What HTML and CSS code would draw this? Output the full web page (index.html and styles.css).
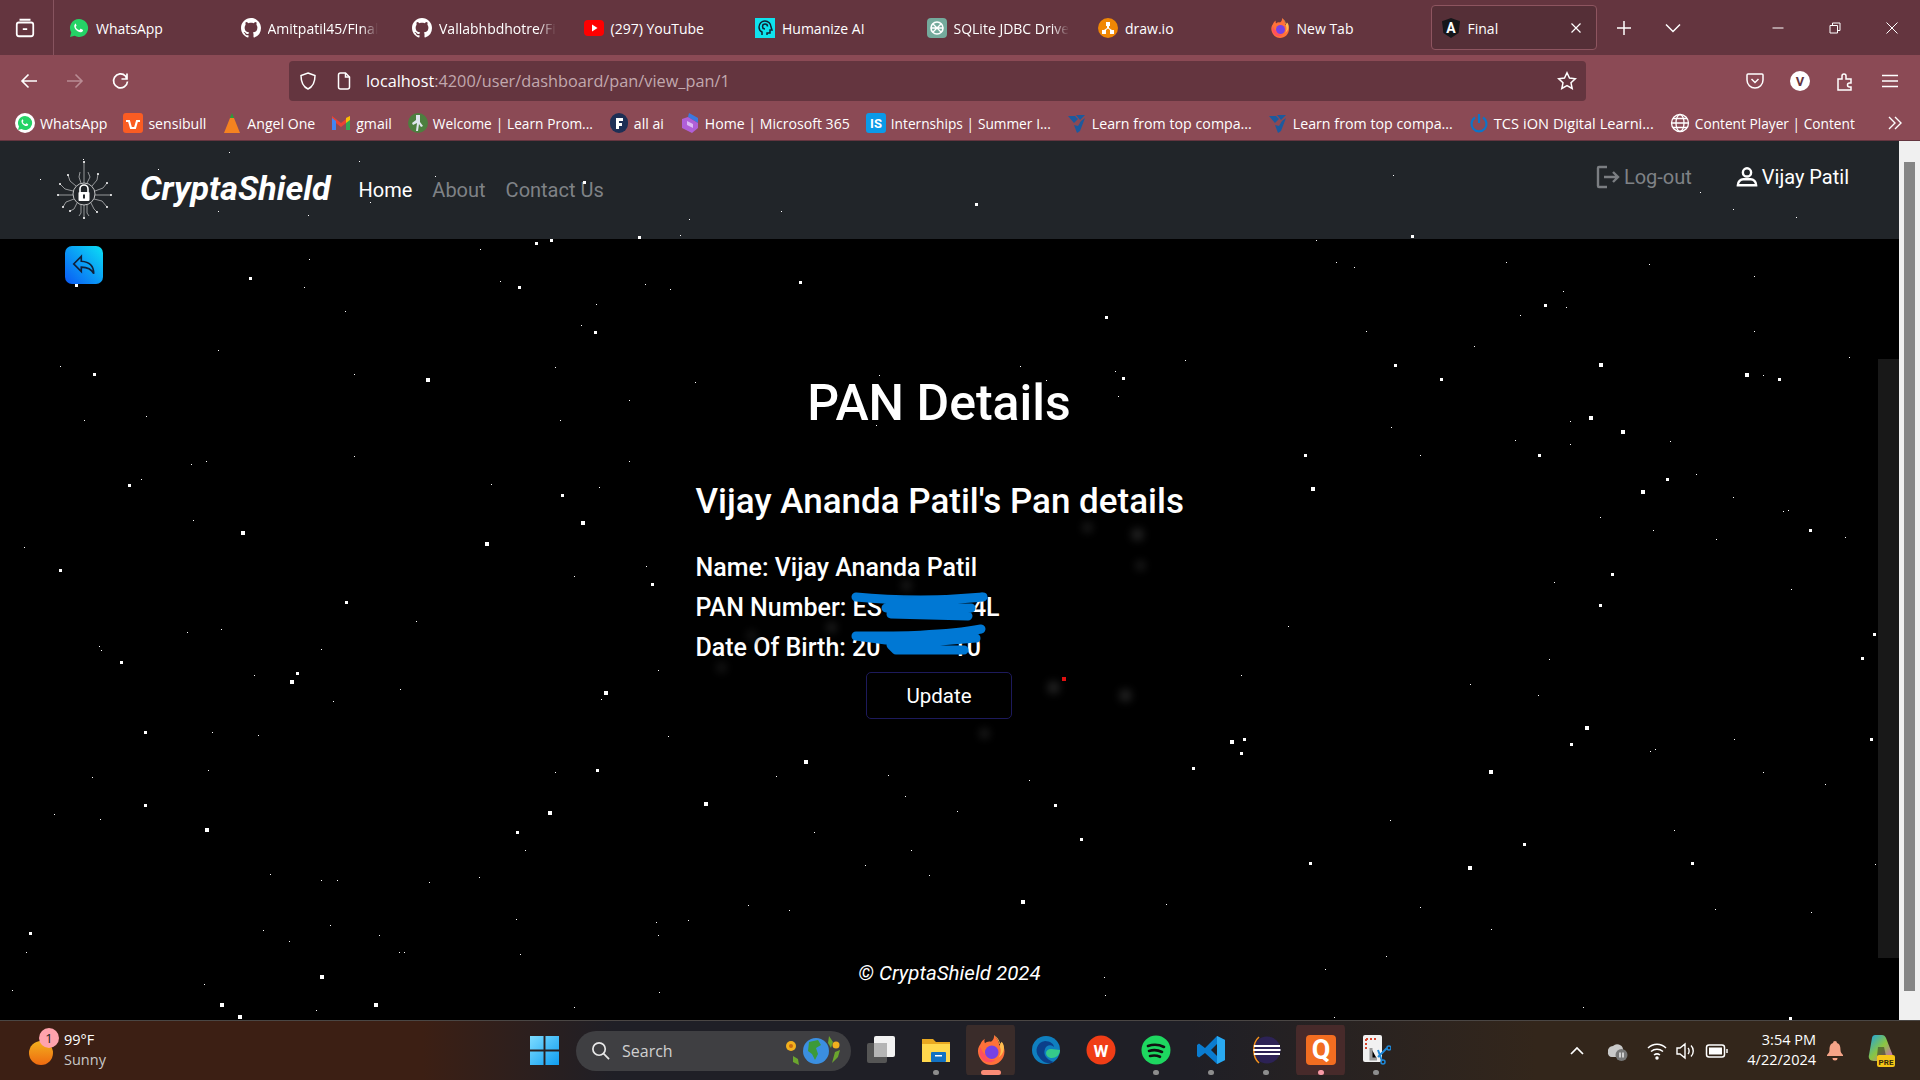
FILE: index.html
```html
<!DOCTYPE html>
<html lang="en">
<head>
    <meta charset="UTF-8">
    <title>Final</title>
    <link rel="stylesheet" href="styles.css">
</head>
<body>
    <svg class="defs" width="0" height="0">
        <symbol id="i-github" viewBox="0 0 16 16"><path fill="#fff" d="M8 0C3.58 0 0 3.58 0 8c0 3.54 2.29 6.53 5.47 7.59.4.07.55-.17.55-.38 0-.19-.01-.82-.01-1.49-2.01.37-2.53-.49-2.69-.94-.09-.23-.48-.94-.82-1.13-.28-.15-.68-.52-.01-.53.63-.01 1.08.58 1.23.82.72 1.21 1.87.87 2.33.66.07-.52.28-.87.51-1.07-1.78-.2-3.64-.89-3.64-3.95 0-.87.31-1.59.82-2.15-.08-.2-.36-1.02.08-2.12 0 0 .67-.21 2.2.82.64-.18 1.32-.27 2-.27.68 0 1.36.09 2 .27 1.53-1.04 2.2-.82 2.2-.82.44 1.1.16 1.92.08 2.12.51.56.82 1.27.82 2.15 0 3.07-1.87 3.75-3.65 3.95.29.25.54.73.54 1.48 0 1.07-.01 1.93-.01 2.2 0 .21.15.46.55.38A8.013 8.013 0 0016 8c0-4.42-3.58-8-8-8z"/></symbol>
        <symbol id="i-whatsapp" viewBox="0 0 20 20"><path fill="#25d366" d="M10 1a9 9 0 0 0-7.7 13.6L1 19l4.6-1.2A9 9 0 1 0 10 1z"/><path fill="#fff" d="M7.2 5.4c-.3 0-.8.1-1.1.6-.4.5-1 1.3-.8 2.7.3 1.7 1.6 3.4 3.3 4.5 1.5 1 3 1.3 4 .9.9-.3 1.5-1 1.5-1.8 0-.3-.1-.4-.4-.6l-1.8-.9c-.3-.1-.5 0-.7.2l-.7.9c-.2.2-.4.2-.6.1-1.4-.6-2.4-1.5-3.1-2.8-.1-.2-.1-.4.1-.6l.5-.6c.2-.2.2-.4.1-.6l-.8-1.9c-.2-.2-.4-.2-.6-.2z"/></symbol>
        <symbol id="i-whatsapp-b" viewBox="0 0 20 20"><circle cx="10" cy="10" r="10" fill="#fff"/><path fill="#25d366" d="M10 3a7 7 0 0 0-6 10.6L3 17l3.5-1A7 7 0 1 0 10 3z"/><path fill="#fff" d="M8 6.3c-.3 0-.6.1-.9.5-.3.4-.7 1-.6 2 .2 1.3 1.2 2.6 2.5 3.4 1.2.8 2.3 1 3.1.7.7-.3 1.1-.8 1.1-1.4 0-.2-.1-.3-.3-.4l-1.3-.7c-.2-.1-.4 0-.5.1l-.5.7c-.2.1-.3.1-.5.1-1-.5-1.8-1.2-2.3-2.1-.1-.2-.1-.3.1-.5l.4-.4c.1-.2.1-.3.1-.5l-.6-1.4c-.1-.1-.2-.1-.4-.1z"/></symbol>
        <symbol id="i-firefox" viewBox="0 0 20 20"><path fill="#ff7139" d="M3 6C1.5 8 1 10 1.5 12.5 2.5 17 6 20 10 20c5 0 9-4 9-9 0-2-.6-4-2-5.5-.4 1-1 1.5-1.5 1.5C15.500 4.5 14 2 12 0c.3 2-.6 3.5-2 4.5-1.5-.5-3 0-4 1-.5-1-.5-2-.2-3C4.5 3.5 3.5 4.5 3 6z"/><path fill="#ffbd4f" d="M12 0c3 2 4.5 5 4 8 1 2 .5 5-1 7 3-2 4-5 3.5-8-.3-1-.8-2-1.5-2.5-.4 1-1 1.5-1.5 1.5C15.500 4.5 14 2 12 0z"/><circle cx="10.5" cy="11.5" r="4.5" fill="#7542e5"/><path fill="#ff4f5e" d="M6 13c1 3 4 4.5 7 3.5-3 3-8 2-10-2C2 12 2.5 9 3 8c.5 2 1.5 3.5 3 5z"/></symbol>
        <symbol id="i-learn" viewBox="0 0 20 20"><path fill="#1c5a9e" d="M1 3h7l3 3-4 4zM9 2h9l-5 5zM14 8l4-3-5 13-3 2-3-8 4 1z"/></symbol>
    </svg>

    <header class="browser">
        <div class="tabbar">
            <div class="tabview">
                <svg class="ic18" viewBox="0 0 20 20" fill="none" stroke="#fff" stroke-width="1.6"><rect x="2.5" y="5" width="15" height="12.5" rx="2"/><path d="M5 2.5h10M8 11h4"/></svg>
            </div>
            <div class="tab"><svg class="fav"><use href="#i-whatsapp"/></svg><span class="tab-title">WhatsApp</span></div>
            <div class="tab"><svg class="fav"><use href="#i-github"/></svg><span class="tab-title fade">Amitpatil45/FInal</span></div>
            <div class="tab"><svg class="fav"><use href="#i-github"/></svg><span class="tab-title fade">Vallabhbdhotre/Fi</span></div>
            <div class="tab"><svg class="fav" viewBox="0 0 20 20"><rect x="0" y="2" width="20" height="16" rx="4" fill="#f00"/><path fill="#fff" d="M8 6.5l5.5 3.5L8 13.5z"/></svg><span class="tab-title">(297) YouTube</span></div>
            <div class="tab"><svg class="fav" viewBox="0 0 20 20"><rect width="20" height="20" fill="#0fe3ee"/><path fill="none" stroke="#123" stroke-width="1.5" d="M7 17v-3c-2-1-3-3-3-5a6 6 0 0 1 12 0l1 3h-2v3h-3v2M10 11a2.5 2.5 0 1 1 2.5-2.5"/></svg><span class="tab-title">Humanize AI</span></div>
            <div class="tab"><svg class="fav" viewBox="0 0 20 20"><rect width="20" height="20" rx="4" fill="#74aa9c"/><circle cx="10" cy="10" r="6" fill="none" stroke="#fff" stroke-width="1.6"/><path stroke="#fff" stroke-width="1.3" fill="none" d="M6 6l8 8M14 6l-8 8M4 10h12"/></svg><span class="tab-title fade">SQLite JDBC Drive</span></div>
            <div class="tab"><svg class="fav" viewBox="0 0 20 20"><circle cx="10" cy="10" r="10" fill="#f08705"/><path fill="#fff" d="M8 4h4v4h-1v2l3 2h2v4h-4v-4l-2-1.5L8 12v4H4v-4h2l3-2V8H8z"/></svg><span class="tab-title">draw.io</span></div>
            <div class="tab"><svg class="fav"><use href="#i-firefox"/></svg><span class="tab-title">New Tab</span></div>
            <div class="tab tab-active">
                <svg class="fav" viewBox="0 0 20 20"><path fill="#16161a" d="M10 0l9 3.2-1.4 11.8L10 20l-7.6-5L1 3.2z"/><text x="10" y="15" text-anchor="middle" class="fav-letter">A</text></svg>
                <span class="tab-title">Final</span>
                <svg class="tab-close" viewBox="0 0 12 12" stroke="#fff" stroke-width="1.2"><path d="M1.5 1.5l9 9M10.5 1.5l-9 9"/></svg>
            </div>
            <svg class="tab-new" viewBox="0 0 16 16" stroke="#fff" stroke-width="1.5"><path d="M8 1v14M1 8h14"/></svg>
            <svg class="tab-list" viewBox="0 0 16 10" fill="none" stroke="#fff" stroke-width="1.5"><path d="M1 1.5l7 7 7-7"/></svg>
            <div class="win-controls">
                <svg viewBox="0 0 12 12" stroke="#fff"><path d="M0.5 6h11"/></svg>
                <svg viewBox="0 0 12 12" fill="none" stroke="#fff"><path d="M1 3.5h7.5V11H1zM3.5 3.5V1H11v7.5H8.5"/></svg>
                <svg viewBox="0 0 12 12" stroke="#fff"><path d="M0.5 0.5l11 11M11.5 0.5l-11 11"/></svg>
            </div>
        </div>

        <div class="toolbar">
            <svg class="tool back" viewBox="0 0 20 20" fill="none" stroke="#fff" stroke-width="1.6"><path d="M18 10H3M9.5 3.5L3 10l6.5 6.5"/></svg>
            <svg class="tool fwd" viewBox="0 0 20 20" fill="none" stroke="#b98c94" stroke-width="1.6"><path d="M2 10h15M10.5 3.5L17 10l-6.5 6.5"/></svg>
            <svg class="tool reload" viewBox="0 0 20 20" fill="none" stroke="#fff" stroke-width="1.7"><path d="M16 2.5V8h-5.5M16.5 10.5a7 7 0 1 1-2-5.5l1.500 3"/></svg>
            <div class="urlbar">
                <svg class="url-ic" viewBox="0 0 20 20" fill="none" stroke="#fff" stroke-width="1.5"><path d="M10 2l7 2.5c0 6-1.5 11-7 13.5C4.5 15.5 3 10.5 3 4.5z"/></svg>
                <svg class="url-ic page-ic" viewBox="0 0 20 20" fill="none" stroke="#fff" stroke-width="1.5"><path d="M4.5 4a2 2 0 0 1 2-2h5l4 4v10a2 2 0 0 1-2 2h-7a2 2 0 0 1-2-2z"/><path d="M11.5 2v4h4"/></svg>
                <span class="url-text"><span class="url-host">localhost</span>:4200/user/dashboard/pan/view_pan/1</span>
                <svg class="url-star" viewBox="0 0 20 20" fill="none" stroke="#fff" stroke-width="1.5"><path d="M10 1.8l2.5 5.3 5.8.7-4.300 4 1.2 5.700L10 14.700l-5.200 2.800L6 11.800l-4.300-4 5.800-.7z"/></svg>
            </div>
            <div class="tool-right">
                <svg class="tool" viewBox="0 0 20 20" fill="none" stroke="#fff" stroke-width="1.5"><path d="M3 3h14a1 1 0 0 1 1 1v5a8 8 0 0 1-16 0V4a1 1 0 0 1 1-1z"/><path d="M6.5 8l3.5 3.5L13.5 8"/></svg>
                <svg class="tool" viewBox="0 0 20 20"><circle cx="10" cy="10" r="10" fill="#fff"/><text x="10" y="15" text-anchor="middle" class="avatar-letter">V</text></svg>
                <svg class="tool" viewBox="0 0 20 20" fill="none" stroke="#fff" stroke-width="1.5"><path d="M3 8h4V5a2 2 0 0 1 4 0v3h5v4h-1.5a2 2 0 0 0 0 4H16v3H3z"/></svg>
                <svg class="tool" viewBox="0 0 20 20" stroke="#fff" stroke-width="1.6"><path d="M2 4.5h16M2 10h16M2 15.5h16"/></svg>
            </div>
        </div>

        <nav class="bookmarks">
            <a class="bm"><svg class="fav"><use href="#i-whatsapp-b"/></svg><span>WhatsApp</span></a>
            <a class="bm"><svg class="fav" viewBox="0 0 20 20"><rect width="20" height="20" rx="3" fill="#fa5c23"/><path fill="none" stroke="#fff" stroke-width="2.2" d="M3 8h3l2 7h4l2-7h3"/></svg><span>sensibull</span></a>
            <a class="bm"><svg class="fav" viewBox="0 0 20 20"><path fill="#2a9d3a" d="M10 0l2 5H8z"/><path fill="#f58220" d="M8 5h4l6 15H2z"/></svg><span>Angel One</span></a>
            <a class="bm"><svg class="fav" viewBox="0 0 20 20"><path fill="#ea4335" d="M1 3l9 7 9-7v4l-9 7-9-7z"/><path fill="#4285f4" d="M1 5l4 3v9H1z"/><path fill="#34a853" d="M19 5l-4 3v9h4z"/><path fill="#fbbc04" d="M15 5l4-2v4l-4 3z"/></svg><span>gmail</span></a>
            <a class="bm"><svg class="fav" viewBox="0 0 20 20"><circle cx="10" cy="10" r="10" fill="#4d7f3f"/><path fill="#dfe6ee" d="M8 2h4v7l3 4-2 1-2-3-1 7H8l1-8-4 2-1-2 4-3z"/></svg><span class="bm-long">Welcome | Learn Prom...</span></a>
            <a class="bm"><svg class="fav" viewBox="0 0 20 20"><rect x="1" width="18" height="20" rx="9" fill="#1e2f55"/><path fill="#fff" d="M7 5h7v3h-4v2h3v3h-3v3H7z"/></svg><span>all ai</span></a>
            <a class="bm"><svg class="fav" viewBox="0 0 20 20"><path fill="#3b79e0" d="M9 0l9 5v5L8 4z"/><path fill="#b05fd8" d="M2 6l6-2 10 6v5l-6 5-10-5z"/><path fill="#dcb8f5" d="M7 8l6 3v4l-6-3z"/></svg><span>Home | Microsoft 365</span></a>
            <a class="bm"><svg class="fav" viewBox="0 0 20 20"><rect width="20" height="20" rx="3" fill="#0a9ae8"/><text x="10" y="15" text-anchor="middle" class="fav-letter small">IS</text></svg><span class="bm-long">Internships | Summer I...</span></a>
            <a class="bm"><svg class="fav"><use href="#i-learn"/></svg><span class="bm-long learn">Learn from top compa...</span></a>
            <a class="bm"><svg class="fav"><use href="#i-learn"/></svg><span class="bm-long learn">Learn from top compa...</span></a>
            <a class="bm"><svg class="fav" viewBox="0 0 20 20" fill="none" stroke="#0c75c8" stroke-width="2.2"><path d="M10 1v9M6 4.5a7.5 7.5 0 1 0 8 0"/></svg><span class="bm-long tcs">TCS iON Digital Learni...</span></a>
            <a class="bm"><svg class="fav" viewBox="0 0 20 20" fill="none" stroke="#fff" stroke-width="1.3"><circle cx="10" cy="10" r="8.5"/><ellipse cx="10" cy="10" rx="4" ry="8.5"/><path d="M1.5 10h17M3 5.5h14M3 14.5h14"/></svg><span class="bm-long">Content Player | Content</span></a>
            <svg class="bm-more" viewBox="0 0 16 14" fill="none" stroke="#fff" stroke-width="1.4"><path d="M2 1l6 6-6 6M8 1l6 6-6 6"/></svg>
        </nav>
    </header>

    <div class="viewport">
        <div class="page">
            <div class="navbar">
                <svg class="logo" viewBox="0 0 56 58" fill="none" stroke="#c8cacc" stroke-width="0.8">
                    <circle cx="27" cy="33" r="11" stroke="#e8e8e8"/>
                    <g stroke-width="0.7">
                        <path d="M27 22V0M24 22l-2-6 1-5M30 22l3-6-2-5M19 25l-6-5-2-6M35 25l5-6 1-6M16 30l-8-2-5-5M38 30l8-3 4-5M16 34H1M38 34h16M17 38l-8 3-3 5M37 38l8 2 5 6M20 42l-3 6-4 2M34 42l3 6 3 3M24 44v8l-2 3M27 44v14M30 44v8l2 3"/>
                    </g>
                    <g fill="#fff" stroke="none">
                        <circle cx="27" cy="1" r="1"/><circle cx="11" cy="14" r="1"/><circle cx="41" cy="13" r="1"/><circle cx="3" cy="23" r="1"/><circle cx="50" cy="22" r="1"/><circle cx="1" cy="34" r="1"/><circle cx="54" cy="34" r="1"/><circle cx="6" cy="46" r="1"/><circle cx="50" cy="46" r="1"/><circle cx="13" cy="50" r="1"/><circle cx="40" cy="51" r="1"/><circle cx="27" cy="57" r="1"/>
                    </g>
                    <path d="M23 31v-3a4 4 0 0 1 8 0v3" stroke="#fff" stroke-width="1.6"/>
                    <rect x="21.5" y="31" width="11" height="9" rx="1" fill="#fff" stroke="none"/>
                    <rect x="26" y="33.5" width="2" height="4" fill="#212529" stroke="none"/>
                </svg>
                <span class="brand">CryptaShield</span>
                <a class="nav-link active">Home</a>
                <a class="nav-link">About</a>
                <a class="nav-link">Contact Us</a>
                <div class="nav-right">
                    <a class="nav-link"><svg class="nav-ic logout-ic" viewBox="0 0 24 24" fill="none" stroke="#7b7e82" stroke-width="2.4"><path d="M11 2H3a1 1 0 0 0-1 1v18a1 1 0 0 0 1 1h8M8 12h14M17 7l5 5-5 5"/></svg>Log-out</a>
                    <a class="nav-link active"><svg class="nav-ic" viewBox="0 0 24 24" fill="none" stroke="#fff" stroke-width="2.6"><circle cx="12" cy="7" r="4.5"/><path d="M2 21c0-4 3-6.5 6-6.5h8c3 0 6 2.5 6 6.5z"/></svg>Vijay Patil</a>
                </div>
            </div>

            <button class="back-btn" type="button">
                <svg viewBox="0 0 24 24" fill="none" stroke="#10203a" stroke-width="1.5"><path d="M9.5 4L2.5 11l7 7v-4c5 0 9 1 11.500 6 0-7-4-11-11.500-11.500z"/></svg>
            </button>

            <main class="pan">
                <h1 class="pan-title">PAN Details</h1>
                <div class="pan-card">
                    <h2 class="pan-owner">Vijay Ananda Patil's Pan details</h2>
                    <p class="pan-row">Name: Vijay Ananda Patil</p>
                    <p class="pan-row">PAN Number: ES<span class="redacted gap-pan"></span>4L</p>
                    <p class="pan-row">Date Of Birth: 20<span class="redacted gap-dob"></span>10</p>
                    <svg class="scribble" viewBox="0 0 487 110" fill="none" stroke="#0078d4" stroke-width="9" stroke-linecap="round" stroke-linejoin="round">
                        <path d="M160 37C200 41 250 41 287 37L200 43 190 48 275 48 195 54 272 56"/>
                        <path d="M285 69C250 76 200 76 160 76L190 80 280 78 195 85 200 90 268 90"/>
                    </svg>
                </div>
                <button class="update-btn" type="button">Update</button>
            </main>

            <footer class="page-footer">© CryptaShield 2024</footer>

            <div class="side-panel"></div>
            <div class="sky">
                <div class="glows"></div>
                <div class="stars-sm"></div>
                <div class="stars-md"></div>
                <div class="stars-lg"></div>
            </div>
        </div>
        <div class="scrollbar"><div class="thumb"></div></div>
    </div>

    <footer class="taskbar">
        <div class="weather">
            <span class="sun"></span>
            <span class="badge">1</span>
            <div class="weather-text">
                <div>99°F</div>
                <div class="dim">Sunny</div>
            </div>
        </div>
        <div class="task-center">
            <svg class="start" viewBox="0 0 30 30"><defs><linearGradient id="winblue" x1="0" y1="0" x2="1" y2="1"><stop offset="0" stop-color="#7ddcff"/><stop offset="1" stop-color="#0f9df0"/></linearGradient></defs><path fill="url(#winblue)" d="M0 0h14v14H0zM16 0h14v14H16zM0 16h14v14H0zM16 16h14v14H16z"/></svg>
            <div class="search">
                <svg class="search-ic" viewBox="0 0 20 20" fill="none" stroke="#e8e8e8" stroke-width="1.8"><circle cx="8.5" cy="8.5" r="6.5"/><path d="M13 13l6 6"/></svg>
                <span>Search</span>
                <svg class="search-art" viewBox="0 0 60 34">
                    <circle cx="33" cy="17" r="13" fill="#3b8fe0"/>
                    <path fill="#3c9a38" d="M26 8l9-2 3 5-5 3 2 6-3 6-3-6-4-3z"/>
                    <path fill="#6ba52e" d="M46 2l4 6-2 6-3-5zM52 18l5-2-2 7-6 6zM10 22l5 3 1 6-6-3z"/>
                    <circle cx="8" cy="12" r="5" fill="#f2b01e"/><circle cx="8" cy="12" r="2" fill="#c96a10"/>
                    <circle cx="53" cy="11" r="3.5" fill="#f2b01e"/>
                </svg>
            </div>
            <div class="task"><svg viewBox="0 0 30 30"><rect x="1" y="8" width="20" height="20" rx="2" fill="#555"/><rect x="8" y="1" width="21" height="21" rx="2" fill="#f2f2f2"/><rect x="8" y="8" width="13" height="14" fill="#b5b5b5"/></svg></div>
            <div class="task dot"><svg viewBox="0 0 30 30"><path fill="#e8a820" d="M1 4h11l3 3h14v20H1z"/><path fill="#ffd84d" d="M1 9h28v18H1z"/><rect x="10" y="17" width="15" height="10" rx="1" fill="#1272c4"/><rect x="14" y="20" width="7" height="1.5" fill="#fff"/></svg></div>
            <div class="task running"><svg><use href="#i-firefox"/></svg></div>
            <div class="task"><svg viewBox="0 0 30 30"><circle cx="15" cy="15" r="14" fill="#0f7fbf"/><path fill="#35c98a" d="M29 15c0 5-4 8-8 8-3 0-6-2-6-5 0-2 2-4 5-4 4 0 6 1 9 1z"/><path fill="#0b3f8a" d="M8 22C3 16 6 7 14 6c5 0 9 3 9 6-3-3-8-2-9 2-1 3-1 5 1 8 3 4 8 5 8 5-6 3-12 0-15-5z"/></svg></div>
            <div class="task"><svg viewBox="0 0 30 30"><circle cx="15" cy="15" r="14.5" fill="#f03d16"/><text x="15" y="22" text-anchor="middle" class="task-letter">W</text></svg></div>
            <div class="task dot"><svg viewBox="0 0 30 30"><circle cx="15" cy="15" r="14.5" fill="#1ed760"/><path fill="none" stroke="#111" stroke-width="2.6" stroke-linecap="round" d="M7 11c6-2 11-1.5 16 1M8 16c5-1.5 9-1 13 1M9 21c4-1 7-.6 10 .8"/></svg></div>
            <div class="task dot"><svg viewBox="0 0 30 30"><path fill="#0a7ccf" d="M21 1l8 4v20l-8 4-12-11-6 4.5-2-1.5V10l2-1.5L9 13z"/><path fill="#29a9f0" d="M21 1l8 4v20l-8 4z"/><path fill="#1f2024" d="M21 9l-6 6 6 6z"/></svg></div>
            <div class="task dot"><svg viewBox="0 0 30 30"><circle cx="16" cy="15" r="13.5" fill="#2c2255"/><path fill="none" stroke="#f7941e" stroke-width="1.5" d="M8 2C1 8 1 22 8 28"/><path stroke="#fff" stroke-width="2" d="M3 11h26M2.5 15h27M3 19h26"/></svg></div>
            <div class="task running-dot"><svg viewBox="0 0 30 30"><rect width="30" height="30" rx="4" fill="#f26d21"/><text x="15" y="24" text-anchor="middle" class="task-letter big">Q</text></svg></div>
            <div class="task dot"><svg viewBox="0 0 30 30"><rect x="2" y="0" width="19" height="27" rx="2" fill="#f1f1f1"/><path stroke="#d9452c" stroke-width="2" stroke-dasharray="2 2" fill="none" d="M5 4h11M5 4v10"/><path stroke="#9a9a9a" stroke-width="3" d="M10 13v11h6"/><path stroke="#1e88d8" stroke-width="2" fill="none" d="M17 22l9-9M17 15l4 11"/><circle cx="22" cy="27" r="2" fill="none" stroke="#1e88d8" stroke-width="1.5"/><circle cx="28" cy="13" r="2" fill="none" stroke="#1e88d8" stroke-width="1.5"/></svg></div>
        </div>
        <div class="tray">
            <svg class="tray-chev" viewBox="0 0 14 10" fill="none" stroke="#fff" stroke-width="1.7"><path d="M1 8l6-6 6 6"/></svg>
            <svg class="tray-ic cloud" viewBox="0 0 22 22"><path fill="#c9c9c9" d="M2 12a5 5 0 0 1 5-6 6 6 0 0 1 10 3v8H6a4 4 0 0 1-4-5z"/><circle cx="15.5" cy="15" r="6" fill="#777"/><path stroke="#fff" stroke-width="1.3" d="M14 12.5v5M17 12.5v5"/></svg>
            <svg class="tray-ic wifi" viewBox="0 0 22 22" fill="none" stroke="#fff" stroke-width="1.5"><path d="M2 8c5-5 13-5 18 0M5 11.5c3.5-3 8.5-3 12 0M8 15c2-1.5 4-1.5 6 0"/><circle cx="11" cy="18" r="1" fill="#fff"/></svg>
            <svg class="tray-ic vol" viewBox="0 0 22 22" fill="none" stroke="#fff" stroke-width="1.4"><path d="M2 8v6h3l5 4V4L5 8zM13 8c1.5 1.5 1.5 4.5 0 6M16 5.5c3 3 3 8 0 11"/></svg>
            <svg class="tray-ic batt" viewBox="0 0 24 22" fill="none" stroke="#fff" stroke-width="1.5"><rect x="1.5" y="5" width="18" height="12" rx="2.5"/><rect x="4" y="7.5" width="13" height="7" fill="#fff" stroke="none"/><path d="M22 9v4"/></svg>
            <div class="clock">
                <div>3:54 PM</div>
                <div>4/22/2024</div>
            </div>
            <svg class="tray-ic bell" viewBox="0 0 20 22"><path fill="#f5a488" d="M10 1a2 2 0 0 1 2 2c3 1 3.5 4 3.5 7 0 2 1 3.5 2.5 5v1H2v-1c1.5-1.5 2.5-3 2.5-5 0-3 .5-6 3.5-7a2 2 0 0 1 2-2zM7.5 18h5a2.5 2.5 0 0 1-5 0z"/></svg>
            <svg class="copilot" viewBox="0 0 30 34"><defs><linearGradient id="cop" x1="0" y1="0" x2="1" y2="1"><stop offset="0" stop-color="#19a3e8"/><stop offset="0.5" stop-color="#8cc63f"/><stop offset="1" stop-color="#d74fd0"/></linearGradient></defs><path fill="url(#cop)" d="M9 1h7c2 0 3 1 4 3l7 18c1 3-1 5-4 5H8C4 27 2 24 3 21L6 4c0-2 2-3 3-3z"/><path fill="#2a2320" d="M12 13h6l2 9h-9z" opacity=".5"/><rect x="11" y="21" width="18" height="12" rx="2" fill="#f5c518"/><text x="20" y="30.5" text-anchor="middle" class="pre-letter">PRE</text></svg>
        </div>
    </footer>
</body>
</html>
```

FILE: styles.css
```css
* {
    box-sizing: border-box;
}

html, body {
    margin: 0;
    padding: 0;
    height: 100%;
}

body {
    display: flex;
    flex-direction: column;
    width: 1920px;
    height: 1080px;
    overflow: hidden;
    background-color: #000;
    color: #fff;
    font-family: Roboto, sans-serif;
}

.defs {
    position: absolute;
}

svg {
    display: block;
    flex: none;
}

.fav {
    width: 20px;
    height: 20px;
}

.fav-letter {
    font: 700 14px Roboto, sans-serif;
    fill: #fff;
}

.fav-letter.small {
    font-size: 13px;
}

/* browser chrome */
.browser {
    font-family: "Open Sans", sans-serif;
    font-size: 14px;
    flex: none;
}

.tabbar {
    display: flex;
    align-items: center;
    height: 55px;
    background-color: #64353f;
}

.tabview {
    display: flex;
    align-items: center;
    justify-content: center;
    width: 54px;
    height: 55px;
    padding-right: 4px;
    border-right: 1px solid #87545f;
    margin-right: 4.5px;
}

.ic18 {
    width: 22px;
    height: 22px;
}

.tab {
    display: flex;
    align-items: center;
    gap: 7px;
    width: 171.5px;
    height: 45px;
    padding-left: 10.5px;
}

.tab-title {
    padding-top: 1px;
    white-space: nowrap;
}

.fade {
    -webkit-mask-image: linear-gradient(to right, #000 85%, transparent);
    mask-image: linear-gradient(to right, #000 85%, transparent);
}

.tab-active {
    width: 166px;
    padding-left: 9px;
    margin-right: 19px;
    background-color: #552f37;
    border: 1px solid #8e5560;
    border-radius: 4px;
}

.tab-close {
    width: 12px;
    height: 12px;
    margin-left: auto;
    margin-right: 14px;
}

.tab-new {
    width: 16px;
    height: 16px;
    margin-right: 33px;
}

.tab-list {
    width: 16px;
    height: 10px;
}

.win-controls {
    display: flex;
    align-items: center;
    gap: 45px;
    margin-left: 91px;
}

.win-controls svg {
    width: 12px;
    height: 12px;
}

.toolbar {
    display: flex;
    align-items: center;
    height: 51px;
    padding-left: 19px;
    background-color: #8b4a55;
}

.tool {
    width: 20px;
    height: 20px;
}

.fwd, .reload {
    margin-left: 26px;
}

.urlbar {
    display: flex;
    align-items: center;
    width: 1297px;
    height: 40px;
    margin-left: 158px;
    padding: 0 9px 0 9px;
    background-color: #64353f;
    border-radius: 4px;
}

.url-ic {
    width: 20px;
    height: 20px;
}

.page-ic {
    margin-left: 16px;
}

.url-text {
    margin-left: 12px;
    padding-top: 1px;
    font-size: 16.3px;
    color: #c2a8ae;
    white-space: nowrap;
}

.url-host {
    color: #fff;
}

.url-star {
    width: 20px;
    height: 20px;
    margin-left: auto;
}

.tool-right {
    display: flex;
    align-items: center;
    gap: 25px;
    margin-left: 159px;
}

.avatar-letter {
    font: 700 13px Roboto, sans-serif;
    fill: #64353f;
}

.bookmarks {
    display: flex;
    align-items: center;
    height: 35px;
    padding-left: 15px;
    gap: 16px;
    background-color: #8b4a55;
    border-bottom: 1px solid #64353f;
    font-size: 14.1px;
    white-space: nowrap;
}

.bm {
    display: flex;
    align-items: center;
    gap: 5px;
    color: #fff;
}

/* firefox caps long bookmark titles at the same width */
.bm-long {
    display: block;
    width: 160px;
    font-size: 13.7px;
    text-align: justify;
    text-align-last: justify;
    white-space: normal;
}

.learn {
    font-size: 14.2px;
}

.tcs {
    font-size: 14.6px;
}

.bm-more {
    width: 16px;
    height: 14px;
    margin-left: auto;
    margin-right: 17px;
}

/* the page inside the browser */
.viewport {
    display: flex;
    flex: 1;
    min-height: 0;
}

.page {
    position: relative;
    display: flex;
    flex-direction: column;
    flex: 1;
    overflow: hidden;
    background-color: #000;
}

.navbar {
    display: flex;
    align-items: center;
    flex: none;
    height: 98px;
    padding-left: 57px;
    background-color: #212529;
}

.logo {
    width: 56px;
    height: 58px;
    margin-right: 27px;
}

.brand {
    margin-right: 18px;
    margin-bottom: 5px;
    font-size: 34px;
    font-weight: 700;
    font-style: italic;
}

.nav-link {
    display: flex;
    align-items: center;
    padding: 0 10px;
    font-size: 20px;
    color: #7f8286;
    white-space: nowrap;
}

.nav-link.active {
    color: #fff;
}

.nav-right {
    display: flex;
    align-items: center;
    gap: 24px;
    margin-left: auto;
    margin-right: 40px;
    margin-bottom: 26px;
}

.nav-ic {
    width: 22px;
    height: 22px;
    margin-right: 4px;
}

.logout-ic {
    width: 24px;
    height: 24px;
}

.back-btn {
    display: flex;
    align-items: center;
    justify-content: center;
    flex: none;
    width: 38px;
    height: 38px;
    margin: 7px 0 0 65px;
    padding: 0;
    border: none;
    border-radius: 7px;
    background: linear-gradient(to bottom left, #0be0f6, #0a58f5);
}

.back-btn svg {
    width: 26px;
    height: 26px;
}

.pan {
    display: flex;
    flex-direction: column;
    align-items: center;
    padding-right: 21px;
}

.pan-title {
    margin: 89px 0 0;
    font-size: 50px;
    line-height: 60px;
    font-weight: 500;
}

.pan-card {
    position: relative;
    width: 487px;
    margin-top: 48px;
}

.pan-owner {
    margin: 0 0 25px;
    font-size: 35px;
    line-height: 42px;
    font-weight: 500;
    white-space: nowrap;
}

.pan-row {
    margin: 0;
    font-size: 25px;
    line-height: 40px;
    font-weight: 500;
}

.redacted {
    display: inline-block;
}

.gap-pan {
    width: 90px;
}

.gap-dob {
    width: 72px;
}

.scribble {
    position: absolute;
    left: 0;
    bottom: -2px;
    width: 487px;
    height: 110px;
}

.update-btn {
    width: 146px;
    height: 47px;
    margin-top: 4px;
    background: transparent;
    border: 1px solid #1d1a5c;
    border-radius: 5px;
    color: #fff;
    font-family: Roboto, sans-serif;
    font-size: 20.5px;
}

.page-footer {
    margin-top: auto;
    padding-bottom: 35px;
    text-align: center;
    font-size: 20.5px;
    font-style: italic;
}

.side-panel {
    position: absolute;
    top: 218px;
    right: 0;
    width: 21px;
    height: 599px;
    background-color: #181818;
}

/* star field: coordinates are screen pixels, the layer is pulled up by the chrome height */
.sky {
    position: absolute;
    left: 0;
    top: -141px;
    pointer-events: none;
}

.sky div {
    position: absolute;
}

.glows {
    width: 1px;
    height: 1px;
    box-shadow: 1087px 527px 9px 4px #1e1e1e, 1137px 534px 9px 5px #252525, 1140px 565px 9px 4px #1c1c1c, 906px 585px 9px 4px #1e1e1e, 831px 627px 9px 4px #222, 751px 635px 9px 4px #161616, 721px 667px 9px 4px #181818, 1053px 687px 9px 5px #252525, 1125px 695px 9px 5px #252525, 984px 733px 8px 4px #1e1e1e;
}

.stars-sm {
    width: 1px;
    height: 1px;
    box-shadow: 83px 159px #fff, 40px 179px #fff, 229px 152px #fff, 158px 169px #fff, 359px 161px #fff, 435px 176px #fff, 218px 211px #fff, 308px 215px #fff, 370px 202px #fff, 1700px 192px #fff, 1733px 209px #fff, 1796px 217px #fff, 1393px 175px #fff, 689px 219px #fff, 781px 211px #fff,
        480px 249px #fff, 309px 259px #fff, 304px 287px #fff, 500px 281px #fff, 645px 284px #fff, 670px 289px #fff, 596px 304px #fff, 345px 311px #fff, 581px 325px #fff, 218px 350px #fff, 60px 366px #fff, 354px 374px #fff, 555px 367px #fff, 695px 382px #fff, 629px 400px #fff, 84px 420px #fff, 146px 416px #fff, 560px 420px #fff, 354px 456px #fff, 629px 461px #fff, 191px 464px #fff, 206px 461px #fff, 141px 479px #fff, 491px 484px #fff, 599px 487px #fff, 193px 520px #fff, 24px 547px #fff, 646px 566px #fff, 574px 576px #fff, 416px 621px #fff, 187px 632px #fff, 221px 629px #fff, 680px 235px #fff,
        99px 646px #fff, 101px 650px #fff, 321px 649px #fff, 254px 675px #fff, 658px 670px #fff, 400px 689px #fff, 333px 701px #fff, 601px 699px #fff, 212px 732px #fff, 258px 735px #fff, 668px 736px #fff, 208px 770px #fff, 92px 777px #fff, 555px 772px #fff, 54px 814px #fff, 100px 819px #fff, 525px 850px #fff, 270px 874px #fff, 321px 880px #fff, 337px 880px #fff, 429px 882px #fff, 479px 877px #fff, 516px 919px #fff, 656px 922px #fff, 688px 920px #fff, 330px 925px #fff, 263px 930px #fff, 379px 935px #fff, 289px 941px #fff, 658px 935px #fff, 26px 952px #fff, 399px 952px #fff, 404px 952px #fff, 520px 954px #fff, 204px 984px #fff, 12px 990px #fff, 659px 992px #fff, 316px 1010px #fff, 574px 1007px #fff,
        1316px 240px #fff, 1336px 262px #fff, 1354px 267px #fff, 1506px 262px #fff, 1649px 264px #fff, 1754px 276px #fff, 1563px 291px #fff, 1566px 307px #fff, 1520px 315px #fff, 1366px 331px #fff, 1754px 331px #fff, 1474px 346px #fff, 1849px 357px #fff, 1763px 375px #fff, 1570px 421px #fff, 1391px 427px #fff, 1515px 440px #fff, 1570px 444px #fff, 1670px 441px #fff, 1420px 455px #fff, 1696px 474px #fff, 1733px 497px #fff, 1783px 511px #fff, 1788px 510px #fff, 1600px 517px #fff, 1653px 530px #fff, 1716px 539px #fff, 1845px 537px #fff, 1554px 582px #fff, 1791px 589px #fff, 1288px 626px #fff,
        1549px 659px #fff, 1241px 675px #fff, 1470px 684px #fff, 1538px 695px #fff, 1734px 739px #fff, 1650px 751px #fff, 1655px 749px #fff, 1763px 772px #fff, 1825px 784px #fff, 1390px 820px #fff, 1674px 830px #fff, 1875px 864px #fff, 1420px 907px #fff, 1715px 909px #fff, 1811px 912px #fff, 1491px 929px #fff, 1386px 956px #fff, 1325px 969px #fff, 1583px 1007px #fff, 1334px 1017px #fff,
        776px 776px #fff, 888px 775px #fff, 1029px 780px #fff, 905px 796px #fff, 957px 811px #fff, 814px 832px #fff, 911px 850px #fff, 865px 865px #fff, 929px 875px #fff, 748px 905px #fff, 789px 910px #fff, 1166px 904px #fff, 1104px 977px #fff, 1105px 995px #fff, 879px 375px #fff, 1020px 366px #fff, 1046px 380px #fff, 1115px 371px #fff, 1118px 396px #fff, 1185px 360px #fff, 876px 425px #fff;
}

.stars-md {
    left: -1px;
    top: -1px;
    width: 3px;
    height: 3px;
    box-shadow: 536px 243px #fff, 551px 240px #fff, 639px 237px #fff, 250px 278px #fff, 76px 285px #fff, 519px 287px #fff, 595px 332px #fff, 94px 374px #fff, 129px 485px #fff, 562px 495px #fff, 60px 570px #fff, 652px 584px #fff, 346px 602px #fff,
        121px 662px #fff, 297px 673px #fff, 145px 732px #fff, 597px 770px #fff, 145px 805px #fff, 517px 832px #fff, 30px 933px #fff,
        1412px 236px #fff, 1545px 305px #fff, 1395px 365px #fff, 1779px 379px #fff, 1441px 379px #fff, 1305px 455px #fff, 1539px 455px #fff, 1667px 479px #fff, 1810px 530px #fff, 1612px 574px #fff, 1600px 605px #fff, 1874px 634px #fff,
        1862px 658px #fff, 1571px 744px #fff, 1244px 739px #fff, 1241px 753px #fff, 1871px 739px #fff, 1524px 844px #fff, 1310px 863px #fff, 1692px 863px #fff, 1790px 1018px #fff,
        1193px 768px #fff, 1055px 805px #fff, 1081px 839px #fff, 1123px 378px #fff, 584px 182px #fff, 976px 204px #fff, 800px 282px #fff, 1106px 317px #fff;
}

.stars-lg {
    left: -2px;
    top: -2px;
    width: 4px;
    height: 4px;
    box-shadow: 428px 380px #fff, 583px 523px #fff, 243px 533px #fff, 487px 544px #fff, 292px 682px #fff, 606px 693px #fff, 550px 813px #fff, 207px 830px #fff, 322px 977px #fff, 222px 1005px #fff, 376px 1005px #fff, 240px 1017px #fff,
        1601px 365px #fff, 1747px 375px #fff, 1591px 418px #fff, 1623px 432px #fff, 1313px 489px #fff, 1643px 492px #fff, 1587px 728px #fff, 1232px 742px #fff, 1491px 772px #fff, 1470px 868px #fff, 806px 762px #fff, 706px 804px #fff, 1023px 902px #fff, 1064px 679px #e01010;
}

.scrollbar {
    flex: none;
    width: 21px;
    background-color: #f0f0f0;
}

.thumb {
    width: 11px;
    height: 829px;
    margin: 21px 0 0 5px;
    background-color: #858585;
}

/* windows taskbar */
.taskbar {
    display: flex;
    align-items: center;
    flex: none;
    height: 60px;
    font-family: "Open Sans", sans-serif;
    border-top: 1px solid #4a4644;
    background: linear-gradient(to right, #3c1f14 0, #3c1f14 22%, #1f1f26 32%, #1f1f26 62%, #33261b 80%, #33261b 100%);
}

.weather {
    position: relative;
    display: flex;
    align-items: center;
    width: 530px;
    height: 100%;
    padding-left: 29px;
    font-size: 14.5px;
    line-height: 20px;
}

.sun {
    width: 24px;
    height: 24px;
    margin-top: 4px;
    border-radius: 50%;
    background: linear-gradient(to bottom, #f2b01e, #ef6a10);
}

.badge {
    position: absolute;
    left: 39px;
    top: 7px;
    width: 20px;
    height: 20px;
    border-radius: 50%;
    background-color: #ffa3ad;
    color: #222;
    font-size: 13px;
    text-align: center;
}

.weather-text {
    margin-left: 11px;
    margin-bottom: 2px;
}

.dim {
    color: #c8c8c8;
}

.task-center {
    display: flex;
    align-items: center;
    height: 100%;
}

.start {
    width: 29px;
    height: 29px;
    margin-right: 17px;
}

.search {
    display: flex;
    align-items: center;
    width: 275px;
    height: 40px;
    margin-right: 2px;
    padding-left: 15px;
    border-radius: 20px;
    background-color: #3f3f42;
    color: #d0d0d0;
    font-size: 16px;
}

.search-ic {
    width: 19px;
    height: 19px;
    margin-right: 12px;
}

.search-art {
    width: 60px;
    height: 34px;
    margin-left: auto;
    margin-right: 8px;
}

.task {
    position: relative;
    display: flex;
    align-items: center;
    justify-content: center;
    width: 55px;
    height: 50px;
    margin-bottom: 1px;
}

.task svg {
    width: 30px;
    height: 30px;
}

.task-letter {
    font: 700 17px Roboto, sans-serif;
    fill: #fff;
}

.task-letter.big {
    font-size: 27px;
}

.dot::after, .running::after, .running-dot::after {
    content: "";
    position: absolute;
    bottom: 0;
    left: 50%;
    width: 6px;
    height: 5px;
    margin-left: -3px;
    border-radius: 3px;
    background-color: #8d8d8d;
}

.running, .running-dot {
    border-radius: 5px;
    background-color: #3a2c2a;
    background-clip: content-box;
    padding: 0 3px;
}

.running-dot {
    background-color: #472a2a;
}

.running::after {
    width: 20px;
    margin-left: -10px;
    background-color: #f98b76;
}

.running-dot::after {
    background-color: #f79aa6;
}

.tray {
    display: flex;
    align-items: center;
    margin-left: auto;
    height: 100%;
}

.tray-chev {
    width: 14px;
    height: 10px;
}

.tray-ic {
    width: 22px;
    height: 22px;
}

.cloud {
    margin-left: 22px;
}

.wifi {
    margin-left: 18px;
}

.vol {
    margin-left: 7px;
}

.batt {
    margin-left: 8px;
    width: 24px;
}

.clock {
    margin-left: 18px;
    margin-bottom: 2px;
    font-size: 14.5px;
    line-height: 20px;
    text-align: right;
    white-space: nowrap;
}

.bell {
    width: 20px;
    margin-left: 9px;
}

.copilot {
    width: 30px;
    height: 34px;
    margin-left: 21px;
    margin-right: 24px;
}

.pre-letter {
    font: 700 8px Roboto, sans-serif;
    fill: #33280a;
}
```
